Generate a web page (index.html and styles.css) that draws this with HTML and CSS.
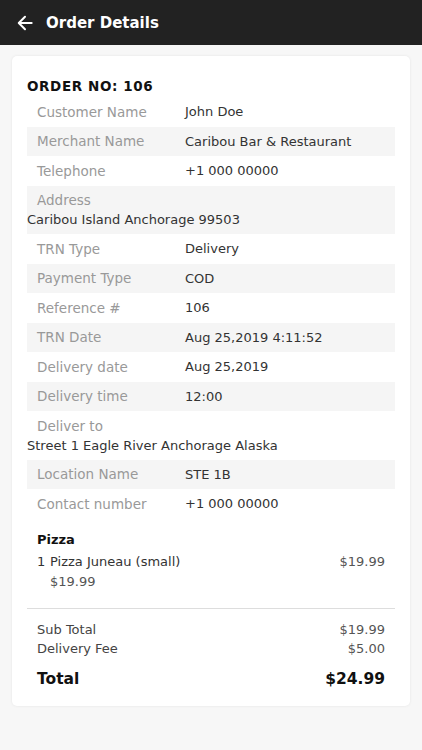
FILE: index.html
```html
<!DOCTYPE html>
<html>
<head>
<meta charset="utf-8">
<link rel="stylesheet" href="styles.css">
</head>
<body>
<header class="topbar">
  <svg class="back" width="20" height="20" viewBox="0 0 24 24"><path d="M20 12H5M12 4.5 4.5 12 12 19.5" fill="none" stroke="#fff" stroke-width="2.4" stroke-linecap="round" stroke-linejoin="round"/></svg>
  <span class="title">Order Details</span>
</header>
<main class="page">
  <section class="card">
    <h1 class="order-no">ORDER NO: 106</h1>
    <div class="rows">
      <div class="row"><span class="label">Customer Name</span><span class="value">John Doe</span></div>
      <div class="row"><span class="label">Merchant Name</span><span class="value">Caribou Bar &amp; Restaurant</span></div>
      <div class="row"><span class="label">Telephone</span><span class="value">+1 000 00000</span></div>
      <div class="row block"><span class="label">Address</span><span class="value">Caribou Island Anchorage 99503</span></div>
      <div class="row"><span class="label">TRN Type</span><span class="value">Delivery</span></div>
      <div class="row"><span class="label">Payment Type</span><span class="value">COD</span></div>
      <div class="row"><span class="label">Reference #</span><span class="value">106</span></div>
      <div class="row"><span class="label">TRN Date</span><span class="value">Aug 25,2019 4:11:52</span></div>
      <div class="row"><span class="label">Delivery date</span><span class="value">Aug 25,2019</span></div>
      <div class="row"><span class="label">Delivery time</span><span class="value">12:00</span></div>
      <div class="row block"><span class="label">Deliver to</span><span class="value">Street 1 Eagle River Anchorage Alaska</span></div>
      <div class="row"><span class="label">Location Name</span><span class="value">STE 1B</span></div>
      <div class="row"><span class="label">Contact number</span><span class="value">+1 000 00000</span></div>
    </div>
    <div class="items">
      <div class="cat">Pizza</div>
      <div class="item">
        <span class="qty">1</span>
        <div class="item-main">
          <div class="item-name">Pizza Juneau (small)</div>
          <div class="item-sub">$19.99</div>
        </div>
        <span class="price">$19.99</span>
      </div>
    </div>
    <div class="totals">
      <div class="trow"><span>Sub Total</span><span>$19.99</span></div>
      <div class="trow"><span>Delivery Fee</span><span>$5.00</span></div>
      <div class="trow grand"><span>Total</span><span>$24.99</span></div>
    </div>
  </section>
</main>
</body>
</html>
```
FILE: styles.css
```css
* { box-sizing: border-box; margin: 0; padding: 0; }
html, body { background: #f7f7f7; }
body { font-family: "DejaVu Sans", sans-serif; color: #222; width: 422px; min-height: 750px; }
.topbar { height: 45px; background: #222; display: flex; align-items: center; padding-left: 15px; gap: 11px; }
.back { display: block; }
.title { color: #fff; font-size: 15px; font-weight: bold; }
.page { padding: 11px 12px 40px; }
.card { background: #fff; border-radius: 5px; box-shadow: 0 0 3px rgba(0,0,0,0.08); padding: 20px 15px 15px; }
.order-no { font-size: 13.5px; font-weight: bold; letter-spacing: 0.6px; color: #111; height: 21px; line-height: 21px; margin-bottom: 0; }
.rows { display: flex; flex-direction: column; }
.row { display: flex; align-items: center; height: 29.5px; font-size: 13px; }
.row:nth-child(even) { background: #f5f5f5; }
.label { width: 158px; padding-left: 10px; color: #999; flex: none; font-size: 13.5px; }
.value { color: #333; }
.row.block { flex-direction: column; align-items: flex-start; height: 48.5px; justify-content: center; gap: 4px; }
.row.block .label { width: auto; }
.items { padding: 13px 10px 16px; font-size: 13px; color: #333; }
.cat { font-weight: bold; color: #111; margin-bottom: 5px; }
.item { display: flex; align-items: flex-start; line-height: 20px; }
.qty { width: 13px; flex: none; }
.item-main { flex: 1; }
.price { color: #555; }
.item-sub { color: #555; }
.totals { border-top: 1px solid #ddd; padding: 11px 10px 0; font-size: 13px; color: #444; }
.trow { display: flex; justify-content: space-between; line-height: 19.5px; }
.trow span:last-child { color: #555; }
.trow.grand { margin-top: 8px; font-size: 15.5px; font-weight: bold; color: #111; line-height: 24px; }
.trow.grand span:last-child { color: #111; }
```
